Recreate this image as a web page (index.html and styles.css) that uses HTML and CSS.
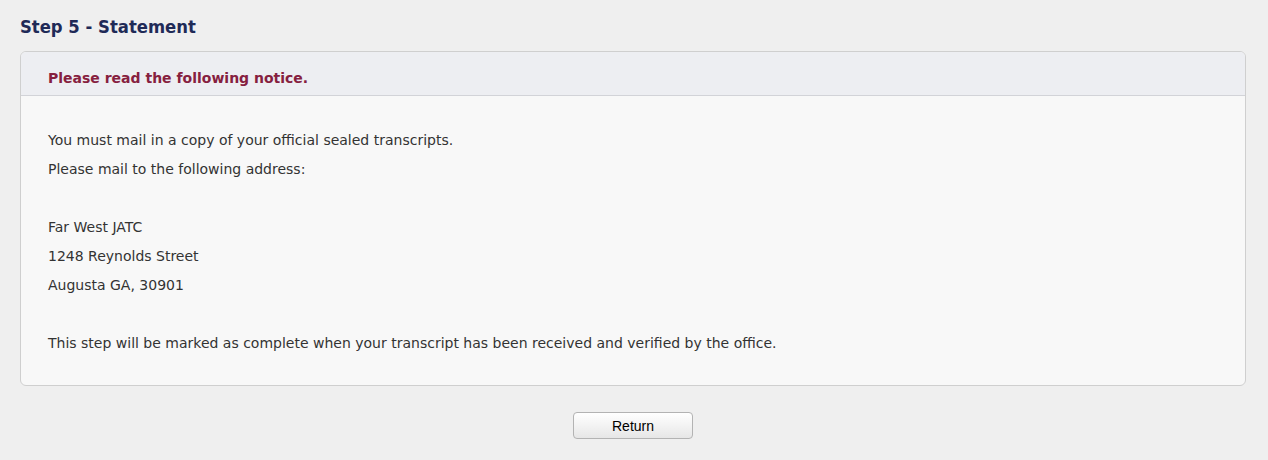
FILE: index.html
```html
<!DOCTYPE html>
<html lang="en">
<head>
<meta charset="utf-8">
<title>Step 5 - Statement</title>
<link rel="stylesheet" href="styles.css">
</head>
<body>
  <main class="page">
    <h1 class="step-title">Step 5 - Statement</h1>
    <section class="panel">
      <header class="panel-head">
        <h2 class="panel-title">Please read the following notice.</h2>
      </header>
      <div class="panel-body">
        <p class="line">You must mail in a copy of your official sealed transcripts.</p>
        <p class="line">Please mail to the following address:</p>
        <p class="line blank">&nbsp;</p>
        <p class="line">Far West JATC</p>
        <p class="line">1248 Reynolds Street</p>
        <p class="line">Augusta GA, 30901</p>
        <p class="line blank">&nbsp;</p>
        <p class="line">This step will be marked as complete when your transcript has been received and verified by the office.</p>
      </div>
    </section>
    <div class="actions">
      <button type="button" class="btn">Return</button>
    </div>
  </main>
</body>
</html>
```

FILE: styles.css
```css
html, body {
  margin: 0;
  padding: 0;
  background: #efefef;
}

.page {
  padding: 15px 22px 0 20px;
  font-family: "DejaVu Sans", Verdana, sans-serif;
  color: #333;
}

.step-title {
  margin: 0 0 12px;
  font-family: "DejaVu Sans Condensed", "DejaVu Sans", Verdana, sans-serif;
  font-stretch: condensed;
  font-size: 18.3px;
  line-height: 24px;
  font-weight: bold;
  color: #1f2a57;
}

.panel {
  border: 1px solid #cfcfcf;
  border-radius: 6px;
  background: #f8f8f8;
  overflow: hidden;
}

.panel-head {
  background: #edeef2;
  border-bottom: 1px solid #d2d3d8;
  padding: 16px 27px 7px;
}

.panel-title {
  margin: 0;
  font-size: 14px;
  line-height: 20px;
  font-weight: bold;
  color: #86203f;
}

.panel-body {
  padding: 30px 27px 27px;
}

.line {
  margin: 0;
  font-size: 14px;
  line-height: 29px;
}

.actions {
  display: flex;
  justify-content: center;
  padding-top: 26px;
}

.btn {
  width: 120px;
  height: 27px;
  font-family: "Liberation Sans", Arial, sans-serif;
  font-size: 14px;
  line-height: 27px;
  color: #000;
  background: linear-gradient(#ffffff, #f3f3f3 50%, #e6e6e6);
  border: 1px solid #b3b3b3;
  border-radius: 4px;
  padding: 0 0 0 0;
}
```
